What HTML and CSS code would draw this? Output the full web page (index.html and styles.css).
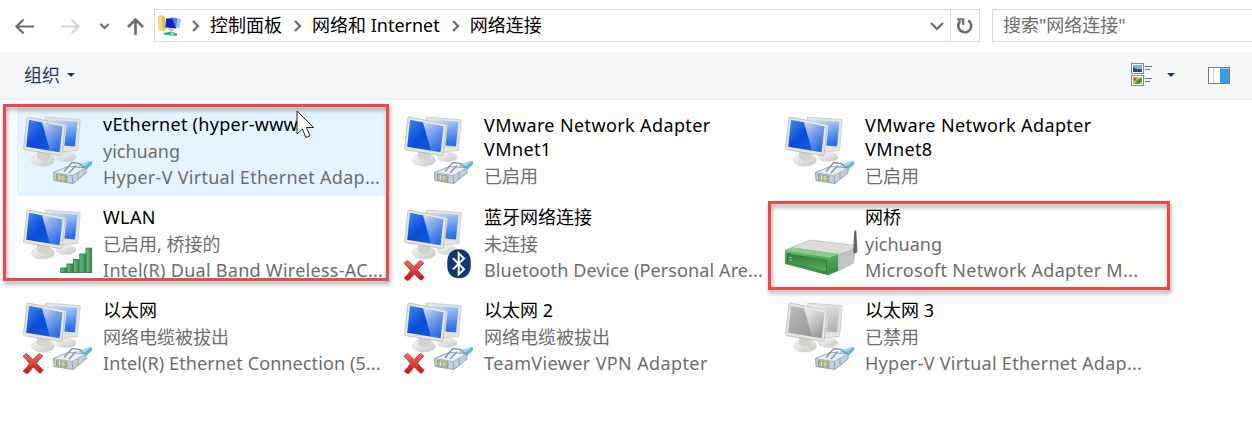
FILE: index.html
```
<!DOCTYPE html>
<html lang="zh-CN">
<head>
    <title>网络连接</title>
    <meta charset="utf-8" />
    <link rel="stylesheet" href="styles.css">
</head>
<body>

    <!-- shared icon parts -->
    <svg class="defs" width="0" height="0">
        <defs>
            <linearGradient id="blue" x1="0" y1="0" x2="1" y2="1">
                <stop offset="0" stop-color="#3f8cf0" />
                <stop offset="0.45" stop-color="#0c4bd6" />
                <stop offset="1" stop-color="#1668e6" />
            </linearGradient>
            <linearGradient id="blue2" x1="0" y1="0" x2="0.3" y2="1">
                <stop offset="0" stop-color="#d3e6fc" />
                <stop offset="1" stop-color="#2a70e8" />
            </linearGradient>
            <linearGradient id="gray" x1="0" y1="0" x2="1" y2="1">
                <stop offset="0" stop-color="#bdbdbd" />
                <stop offset="1" stop-color="#8b8b8b" />
            </linearGradient>
            <linearGradient id="gray2" x1="0" y1="0" x2="0.3" y2="1">
                <stop offset="0" stop-color="#ececec" />
                <stop offset="1" stop-color="#b4b4b4" />
            </linearGradient>
            <linearGradient id="shine" x1="0" y1="0" x2="0.6" y2="1">
                <stop offset="0" stop-color="#fff" stop-opacity="0.8" />
                <stop offset="1" stop-color="#fff" stop-opacity="0.08" />
            </linearGradient>
            <linearGradient id="stand" x1="0" y1="0" x2="1" y2="1">
                <stop offset="0" stop-color="#fafafa" />
                <stop offset="1" stop-color="#c6c6c2" />
            </linearGradient>
            <linearGradient id="green" x1="0" y1="0" x2="0" y2="1">
                <stop offset="0" stop-color="#79c47c" />
                <stop offset="0.4" stop-color="#4fa555" />
                <stop offset="1" stop-color="#3a8a42" />
            </linearGradient>
            <linearGradient id="face" x1="0" y1="0" x2="0" y2="1">
                <stop offset="0" stop-color="#2f7c38" />
                <stop offset="1" stop-color="#62ab62" />
            </linearGradient>
            <linearGradient id="bar" x1="0" y1="0" x2="1" y2="0">
                <stop offset="0" stop-color="#74bb86" />
                <stop offset="1" stop-color="#2f8a4c" />
            </linearGradient>
            <linearGradient id="red" x1="0" y1="0" x2="0" y2="1">
                <stop offset="0" stop-color="#f47068" />
                <stop offset="1" stop-color="#c40f12" />
            </linearGradient>
        </defs>

        <symbol id="frames" viewBox="0 0 76 80">
            <ellipse cx="46" cy="45" rx="10" ry="4.5" fill="url(#stand)" stroke="#d6d6d3" stroke-width="0.6" />
            <path d="M25.5 5 L59 7.5 Q60.3 7.7 60.2 9 L57.6 38.5 L41 40 L24 30 Z" fill="#e3e3df" stroke="#c4c4c0" stroke-width="0.7" />
            <ellipse cx="23" cy="48" rx="11.5" ry="6" fill="url(#stand)" stroke="#cfcfcb" stroke-width="0.7" />
            <path d="M17 38 L30 41 L29 47 Q23 51 17 46 Z" fill="#d2d2ce" />
            <path d="M7 6 Q7.2 5 8.3 5.1 L44 12 Q45.5 12.3 45.3 13.7 L42 42.5 Q41.8 43.7 40.6 43.5 L4.5 37.6 Q3.5 37.3 3.6 36.3 Z" fill="#e6e6e2" stroke="#b0b0ad" stroke-width="0.7" />
        </symbol>
        <symbol id="monitors" viewBox="0 0 76 80">
            <use href="#frames" width="76" height="80" />
            <path d="M28 7.4 L57.4 9.8 L55 34.6 L44.4 33.6 L46.6 13 L28 8.8 Z" fill="url(#blue2)" />
            <path d="M9 7.7 L42.4 14.4 L39.6 40.3 L6.2 34.8 Z" fill="url(#blue)" />
            <path d="M22 10.3 L42.4 14.4 L39.6 40.3 L30 38.7 Z" fill="url(#shine)" />
        </symbol>
        <symbol id="monitors-off" viewBox="0 0 76 80">
            <use href="#frames" width="76" height="80" />
            <path d="M28 7.4 L57.4 9.8 L55 34.6 L44.4 33.6 L46.6 13 L28 8.8 Z" fill="url(#gray2)" />
            <path d="M9 7.7 L42.4 14.4 L39.6 40.3 L6.2 34.8 Z" fill="url(#gray)" />
            <path d="M22 10.3 L42.4 14.4 L39.6 40.3 L30 38.7 Z" fill="url(#shine)" />
        </symbol>
        <symbol id="plug" viewBox="0 0 76 80">
            <path d="M58 53 L71.5 48.8 L72.3 52 L67 57 L61 59.5 Z" fill="#5fb6d6" />
            <path d="M58 53 L71.5 48.8 L66 53.2 L59 56 Z" fill="#9edcee" />
            <path d="M33.5 60.5 L48.5 54.5 L66 56 L66 61 L53 71.5 L34 68.5 Z" fill="#c3cfdb" stroke="#8392a3" stroke-width="0.8" />
            <path d="M33.5 60.5 L48.5 54.5 L66 56 L52 63.5 Z" fill="#e8eff5" stroke="#93a1b0" stroke-width="0.7" />
            <path d="M44 59.5 L52 50.5 L60 51.5 L64 56 M49 61 L56 53.5" fill="none" stroke="#8291a4" stroke-width="1.3" />
            <path d="M52 63.5 L53 71.5 M58 60.5 L58 67.5" stroke="#8796a6" stroke-width="0.8" />
            <path d="M36.5 62.5 L47 64.2 L47 69.3 L36.5 67.6 Z" fill="#b7b98a" stroke="#7d8b86" stroke-width="0.7" />
            <path d="M39.5 63 V68 M43 63.6 V68.6" stroke="#e9e8b0" stroke-width="0.9" />
        </symbol>
        <symbol id="cross" viewBox="0 0 76 80">
            <path d="M3 58.2 L6.5 55.5 Q10 58.5 13 61.8 Q16 58 19.6 55.5 L22.8 58.2 Q19 61.5 16.4 65.2 Q19.5 69 23.2 72 L20.2 75.4 Q16.5 72.5 13.2 68.8 Q10.5 72.8 7 75.8 L3.2 73.2 Q7 69.5 9.6 65.4 Q6.5 61.5 3 58.2 Z" fill="url(#red)" stroke="#b51a1c" stroke-width="0.8" />
        </symbol>
        <symbol id="signal" viewBox="0 0 76 80">
            <g fill="url(#bar)" stroke="#2a7a44" stroke-width="0.9">
                <rect x="40.8" y="63" width="5.6" height="4.5" />
                <rect x="47" y="59" width="5.6" height="8.5" />
                <rect x="53.4" y="54.4" width="5.6" height="13.1" />
                <rect x="59.8" y="49" width="5.6" height="18.5" />
                <rect x="66" y="43.2" width="5.6" height="24.3" />
            </g>
        </symbol>
        <symbol id="bluetooth" viewBox="0 0 76 80">
            <rect x="46.3" y="44.3" width="23.4" height="29" rx="11.3" fill="#12386f" />
            <path d="M52 53.3 L63 64.2 L57.7 69.4 V48.3 L63 53.5 L52 64.4" fill="none" stroke="#fff" stroke-width="2" />
        </symbol>
        <symbol id="bridge" viewBox="0 0 76 80">
            <path d="M3 45 L28 35 L74 40.5 L73 45 L56 50 Z" fill="#dcdddc" stroke="#b4b6b4" stroke-width="0.7" />
            <path d="M56 50.5 L73 43.5 L71.5 58 L56 66 Z" fill="#c3c5c4" stroke="#9fa2a0" stroke-width="0.6" />
            <path d="M3 45.5 L11 42.5 L56 49 V66 L46 70.3 L3 59 Z" fill="url(#green)" />
            <path d="M3 45.5 L11 42.5 L56 49 L47.5 52.8 Z" fill="#8acb8a" />
            <path d="M5 48.5 L44.5 55.5 V67 L5 57.5 Z" fill="url(#face)" stroke="#2c7236" stroke-width="0.6" />
            <path d="M7.5 52.5 h2 M7.5 55 h2" stroke="#b8e0a8" stroke-width="1" />
            <path d="M71 47 L72.3 26 Q73.4 24.6 74.3 26 L75.5 47 L73 48.5 Z" fill="#60676a" />
        </symbol>
    </svg>

    <div class="address-row">
        <div class="nav">
            <svg width="142" height="34" viewBox="0 0 142 34" fill="none">
                <path d="M34 17.5 H16.5 M23.5 10.5 L16.5 17.5 L23.5 24.5" stroke="#6b6b6b" stroke-width="2.2" />
                <path d="M61 17.5 H78.5 M71.5 10.5 L78.5 17.5 L71.5 24.5" stroke="#d6d6d6" stroke-width="2" />
                <path d="M100.5 15 L104.5 19 L108.5 15" stroke="#6b6b6b" stroke-width="2" />
                <path d="M135.5 26 V11 M128 18 L135.5 10.5 L143 18" stroke="#6b6b6b" stroke-width="2.6" />
            </svg>
        </div>
        <div class="address">
            <svg class="place" width="26" height="24" viewBox="0 0 26 24">
                <path d="M1 2 L5 0.5 L7 3 L8 16 L3 17 L1 15 Z" fill="#f1dc80" />
                <path d="M5 2 L8 3 L9 15 L6 17 Z" fill="#d9bd55" />
                <path d="M14 3 L24 5 L22.5 14 L13 13 Z" fill="#9fbdf2" />
                <path d="M9 4.5 L19.5 4 L19 14.5 L8.5 13.5 Z" fill="#1226b8" />
                <path d="M15 4 L19.5 4 L19 14.5 Z" fill="#5680e6" />
                <path d="M12 14 L17 15 L16 17 L11 16 Z" fill="#b4bac4" />
                <path d="M6 19 L14 17.5 L20 19.5 L20 22 L8 21 Z" fill="#3eb284" />
                <path d="M14 18 L17 20 L14 22" fill="#a8e3ca" />
            </svg>
            <svg class="sep" width="10" height="14" viewBox="0 0 10 14"><path d="M2 2 L7 7 L2 12" /></svg>
            <span class="crumb">控制面板</span>
            <svg class="sep" width="10" height="14" viewBox="0 0 10 14"><path d="M2 2 L7 7 L2 12" /></svg>
            <span class="crumb">网络和 Internet</span>
            <svg class="sep" width="10" height="14" viewBox="0 0 10 14"><path d="M2 2 L7 7 L2 12" /></svg>
            <span class="crumb">网络连接</span>
            <svg class="drop" width="16" height="12" viewBox="0 0 16 12"><path d="M2 3 L8 9 L14 3" /></svg>
            <div class="refresh">
                <svg width="18" height="20" viewBox="0 0 18 20">
                    <path d="M12.3 4.3 A6.5 6.5 0 1 1 4.3 5" fill="none" stroke="#6b6b6b" stroke-width="2.6" />
                    <path d="M1.2 3.3 H7.2 V9" fill="none" stroke="#6b6b6b" stroke-width="2.2" />
                </svg>
            </div>
        </div>
        <div class="search">搜索"网络连接"</div>
    </div>

    <div class="toolbar">
        <span class="organize">组织</span>
        <span class="caret"></span>
        <svg class="views" width="22" height="24" viewBox="0 0 22 24">
            <rect x="0.5" y="0.5" width="12" height="10" fill="#fff" stroke="#8b8b86" />
            <rect x="2" y="2" width="9" height="7" fill="#79b7e6" />
            <path d="M2 4 Q6 7 11 6 V9 H2 Z" fill="#23527c" />
            <rect x="0.5" y="12.5" width="12" height="10" fill="#fff" stroke="#8b8b86" />
            <rect x="2" y="14" width="9" height="7" fill="#b4cd79" />
            <circle cx="4" cy="16" r="1.8" fill="#cf4a33" />
            <path d="M4 21 L6 17 L11 15 V18 L8 21 Z" fill="#5d8a38" />
            <path d="M14 3.5 H21 M14 6.5 H19 M14 15.5 H21 M14 18.5 H19" stroke="#66707d" />
        </svg>
        <span class="caret caret-views"></span>
        <svg class="pane" width="22" height="17" viewBox="0 0 22 17">
            <rect x="0.5" y="0.5" width="21" height="16" fill="#fff" stroke="#727a82" />
            <path d="M5.5 1 V16" stroke="#c6c9cc" />
            <rect x="12" y="1.5" width="9" height="14.5" fill="#3b9bea" />
        </svg>
    </div>

    <div class="list">
        <div class="item hover">
            <svg class="icon"><use href="#monitors" /><use href="#plug" /></svg>
            <div class="text">
                <div class="name wide">vEthernet (hyper-www</div>
                <div class="info">yichuang</div>
                <div class="info wide">Hyper-V Virtual Ethernet Adap...</div>
            </div>
        </div>
        <div class="item">
            <svg class="icon"><use href="#monitors" /><use href="#plug" /></svg>
            <div class="text">
                <div class="name two wider">VMware Network Adapter<br>VMnet1</div>
                <div class="info">已启用</div>
            </div>
        </div>
        <div class="item">
            <svg class="icon"><use href="#monitors" /><use href="#plug" /></svg>
            <div class="text">
                <div class="name two wider">VMware Network Adapter<br>VMnet8</div>
                <div class="info">已启用</div>
            </div>
        </div>
        <div class="item">
            <svg class="icon"><use href="#monitors" /><use href="#signal" /></svg>
            <div class="text">
                <div class="name wider">WLAN</div>
                <div class="info">已启用, 桥接的</div>
                <div class="info wide">Intel(R) Dual Band Wireless-AC...</div>
            </div>
        </div>
        <div class="item">
            <svg class="icon"><use href="#monitors" /><use href="#cross" /><use href="#bluetooth" /></svg>
            <div class="text">
                <div class="name">蓝牙网络连接</div>
                <div class="info">未连接</div>
                <div class="info snug">Bluetooth Device (Personal Are...</div>
            </div>
        </div>
        <div class="item">
            <svg class="icon"><use href="#bridge" /></svg>
            <div class="text">
                <div class="name">网桥</div>
                <div class="info">yichuang</div>
                <div class="info wide">Microsoft Network Adapter M...</div>
            </div>
        </div>
        <div class="item">
            <svg class="icon"><use href="#monitors" /><use href="#cross" /><use href="#plug" /></svg>
            <div class="text">
                <div class="name">以太网</div>
                <div class="info">网络电缆被拔出</div>
                <div class="info snug">Intel(R) Ethernet Connection (5...</div>
            </div>
        </div>
        <div class="item">
            <svg class="icon"><use href="#monitors" /><use href="#cross" /><use href="#plug" /></svg>
            <div class="text">
                <div class="name">以太网 2</div>
                <div class="info">网络电缆被拔出</div>
                <div class="info wider">TeamViewer VPN Adapter</div>
            </div>
        </div>
        <div class="item">
            <svg class="icon"><use href="#monitors-off" /><use href="#plug" /></svg>
            <div class="text">
                <div class="name">以太网 3</div>
                <div class="info">已禁用</div>
                <div class="info wide">Hyper-V Virtual Ethernet Adap...</div>
            </div>
        </div>
    </div>

    <!-- red marks and the mouse pointer over the list -->
    <div class="mark mark-left"></div>
    <div class="mark mark-bridge"></div>
    <svg class="pointer" width="20" height="30" viewBox="0 0 20 30">
        <path d="M1 1 V24 L6.3 19 L10 27.5 L14 25.7 L10.4 17.5 H17.5 Z" fill="#fff" stroke="#222" stroke-width="1" />
    </svg>

</body>
</html>
```
FILE: styles.css
```
body {
    margin: 0;
    width: 1252px;
    height: 438px;
    overflow: hidden;
    position: relative;
    background: #fff;
    color: #000;
    font-family: "Noto Sans", "Noto Sans CJK SC", sans-serif;
    font-size: 18px;
}

.defs {
    position: absolute;
}

/* address bar */
.address-row {
    display: flex;
    height: 43px;
    padding-top: 9px;
    box-sizing: border-box;
}

.nav {
    width: 154px;
}

.nav svg {
    display: block;
    overflow: visible;
}

.address {
    display: flex;
    align-items: center;
    width: 826px;
    height: 33px;
    box-sizing: border-box;
    border: 1px solid #d9d9d9;
}

.place {
    margin: 0 8px 0 2px;
}

.sep path,
.drop path {
    fill: none;
    stroke: #6b6b6b;
    stroke-width: 2.2;
}

.crumb {
    margin: 0 11px 0 9px;
    padding-bottom: 3px;
    white-space: nowrap;
}

.drop {
    margin-left: auto;
    margin-right: 5px;
}

.refresh {
    display: flex;
    align-items: center;
    justify-content: center;
    width: 28px;
    height: 31px;
    border-left: 1px solid #d9d9d9;
}

.search {
    flex: 1;
    height: 33px;
    margin-left: 12px;
    padding-left: 10px;
    box-sizing: border-box;
    border: 1px solid #d9d9d9;
    border-right: 0;
    line-height: 31px;
    color: #6d6d6d;
}

/* command bar */
.toolbar {
    display: flex;
    align-items: center;
    height: 46px;
    margin-top: 9px;
    padding: 0 22px 0 24px;
    background: #f5f6f7;
    border-bottom: 2px solid #ededf0;
}

.organize {
    padding-bottom: 2px;
    color: #1e395b;
}

.caret {
    margin-left: 7px;
    border: 4px solid transparent;
    border-top-color: #1e395b;
    border-bottom: 0;
}

.views {
    margin-left: auto;
}

.caret-views {
    margin: 0 33px 0 14px;
}

/* connections */
.list {
    display: grid;
    grid-template-columns: repeat(3, 381px);
    grid-auto-rows: 93px;
    margin: 3px 0 0 17px;
}

.item {
    display: flex;
    width: 368px;
    height: 93px;
}

.hover {
    background: #e5f3ff;
}

.icon {
    flex: none;
    width: 76px;
    height: 80px;
    margin: 9px 7px 0 3px;
}

.text {
    padding-top: 9px;
    white-space: nowrap;
}

.name {
    height: 24px;
    margin-bottom: 2px;
    line-height: 24px;
}

.two {
    height: 48px;
    padding-top: 1px;
    margin-bottom: 2px;
}

.info {
    height: 26px;
    line-height: 26px;
    color: #6d6d6d;
}

.snug {
    letter-spacing: 0.1px;
}

.wide {
    letter-spacing: 0.28px;
}

.wider {
    letter-spacing: 0.38px;
}

/* overlays */
.mark {
    position: absolute;
    box-sizing: border-box;
    border: 3px solid #e8484f;
    filter: drop-shadow(1px 3px 2px rgba(0, 0, 0, 0.4));
}

.mark-left {
    left: 3px;
    top: 104px;
    width: 386px;
    height: 177px;
}

.mark-bridge {
    left: 768px;
    top: 201px;
    width: 402px;
    height: 89px;
}

.pointer {
    position: absolute;
    left: 296px;
    top: 110px;
}
```
